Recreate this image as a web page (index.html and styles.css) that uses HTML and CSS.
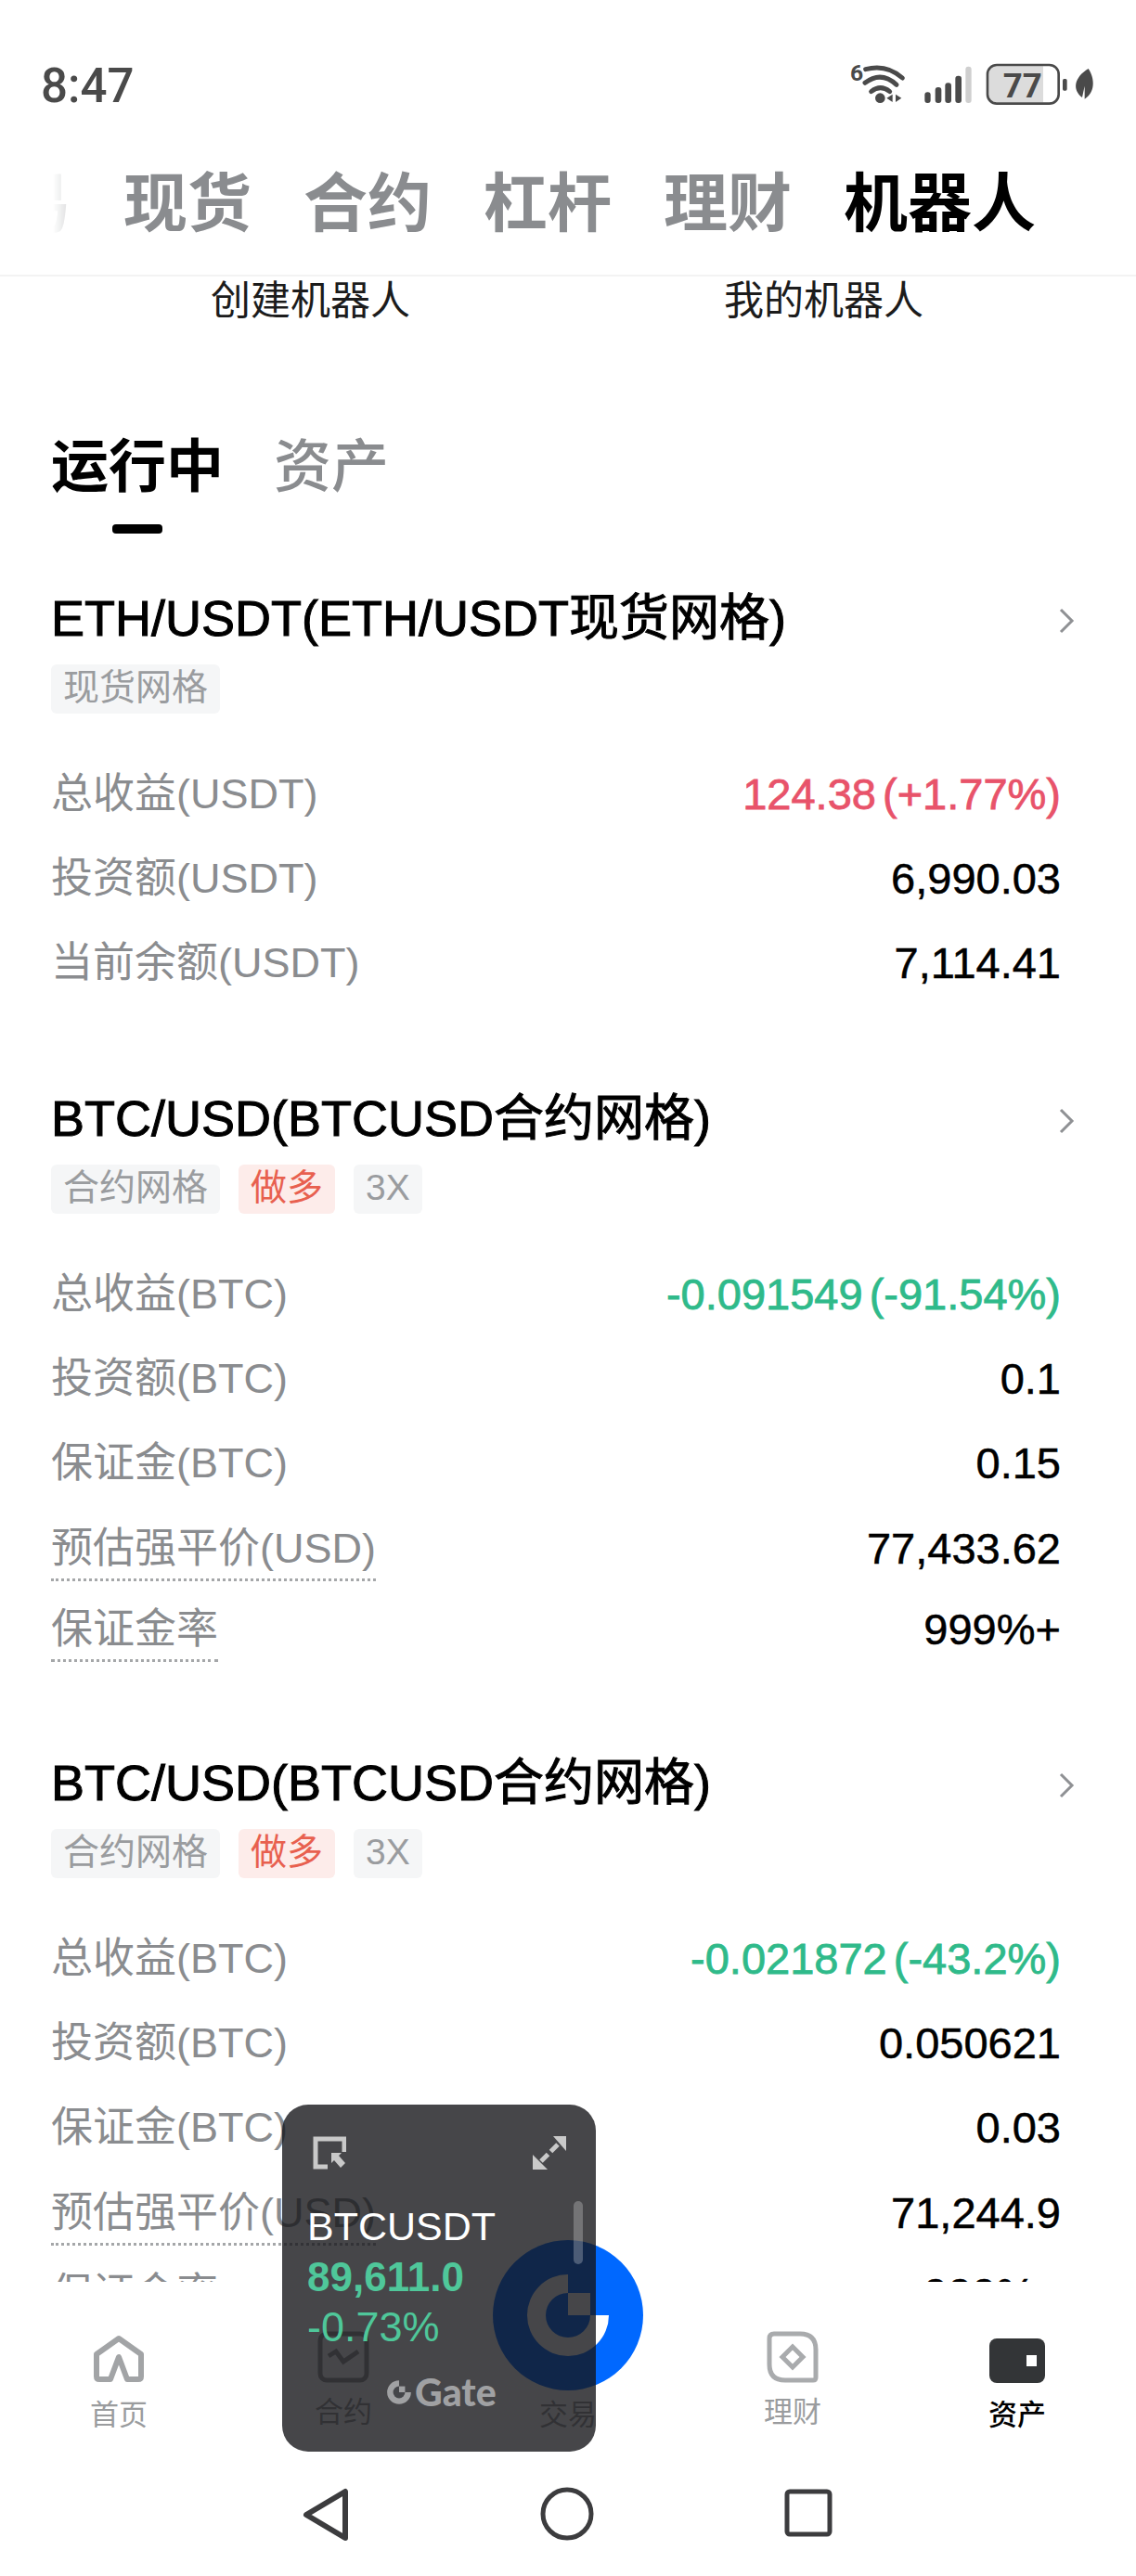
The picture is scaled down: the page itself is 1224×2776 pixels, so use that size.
FILE: index.html
```html
<!DOCTYPE html>
<html lang="zh-CN">
<head>
    <meta charset="UTF-8">
    <meta name="viewport" content="width=device-width, initial-scale=1.0">
    <title>机器人</title>
    <link rel="stylesheet" href="styles.css">
</head>
<body>
<div class="screen">
    <div class="statusbar">
        <span class="clock">8:47</span>
        <svg class="status-icons" viewBox="0 0 1032 240">
            <text x="108" y="112" class="st-six">6</text>
            <g fill="none" stroke="#4a4a4a" stroke-width="15" stroke-linecap="round">
                <path d="M158 74Q225 56 277 102"/>
                <path d="M156 118Q208 78 258 124"/>
                <path d="M176 146Q206 122 236 146"/>
            </g>
            <circle cx="205" cy="167" r="16" fill="#4a4a4a"/>
            <path d="M245 155V180L226 167ZM255 155V180L274 167Z" fill="#4a4a4a"/>
            <g fill="#4a4a4a">
                <rect x="349" y="148" width="19" height="35" rx="9"/>
                <rect x="383" y="132" width="20" height="51" rx="9"/>
                <rect x="415" y="118" width="20" height="65" rx="9"/>
                <rect x="448" y="95" width="20" height="88" rx="9"/>
                <rect x="481" y="65" width="19" height="118" rx="9" fill="#cfcfcf"/>
            </g>
            <path d="M580 64H732V181H580Q556 181 556 157V88Q556 64 580 64Z" fill="#dcdcdc"/>
            <rect x="552" y="60" width="230" height="125" rx="30" fill="none" stroke="#4a4a4a" stroke-width="8"/>
            <text x="665" y="164" class="st-level">77</text>
            <rect x="795" y="105" width="14" height="38" rx="5" fill="#4a4a4a"/>
            <path d="M878 72C900 105 900 150 866 170L866 128L858 165C825 140 832 100 878 72Z" fill="#4a4a4a"/>
        </svg>
    </div>

    <div class="topnav">
        <span class="topnav-cut"><span>交易</span></span>
        <span class="topnav-item">现货</span>
        <span class="topnav-item">合约</span>
        <span class="topnav-item">杠杆</span>
        <span class="topnav-item">理财</span>
        <span class="topnav-item topnav-active">机器人</span>
    </div>

    <div class="content">
        <div class="tools">
            <span>创建机器人</span>
            <span>我的机器人</span>
        </div>

        <div class="subtabs">
            <div class="subtab subtab-active">运行中<i class="subtab-bar"></i></div>
            <div class="subtab">资产</div>
        </div>

        <section class="bot">
            <div class="bot-title">
                <span class="bot-name">ETH/USDT(ETH/USDT现货网格)</span>
                <svg class="chevron" width="18" height="30" viewBox="0 0 18 30"><path d="M3 3L15 15L3 27" fill="none" stroke="#8f9194" stroke-width="3"/></svg>
            </div>
            <div class="tags"><span class="tag">现货网格</span></div>
            <div class="rows">
                <div class="row"><span class="label">总收益(USDT)</span><span class="value up">124.38 (+1.77%)</span></div>
                <div class="row"><span class="label">投资额(USDT)</span><span class="value">6,990.03</span></div>
                <div class="row"><span class="label">当前余额(USDT)</span><span class="value">7,114.41</span></div>
            </div>
        </section>

        <section class="bot">
            <div class="bot-title">
                <span class="bot-name">BTC/USD(BTCUSD合约网格)</span>
                <svg class="chevron" width="18" height="30" viewBox="0 0 18 30"><path d="M3 3L15 15L3 27" fill="none" stroke="#8f9194" stroke-width="3"/></svg>
            </div>
            <div class="tags"><span class="tag">合约网格</span><span class="tag tag-long">做多</span><span class="tag">3X</span></div>
            <div class="rows">
                <div class="row"><span class="label">总收益(BTC)</span><span class="value down">-0.091549 (-91.54%)</span></div>
                <div class="row"><span class="label">投资额(BTC)</span><span class="value">0.1</span></div>
                <div class="row"><span class="label">保证金(BTC)</span><span class="value">0.15</span></div>
                <div class="row row-hint"><span class="label">预估强平价(USD)</span><span class="value">77,433.62</span></div>
                <div class="row row-hint"><span class="label">保证金率</span><span class="value">999%+</span></div>
            </div>
        </section>

        <section class="bot">
            <div class="bot-title">
                <span class="bot-name">BTC/USD(BTCUSD合约网格)</span>
                <svg class="chevron" width="18" height="30" viewBox="0 0 18 30"><path d="M3 3L15 15L3 27" fill="none" stroke="#8f9194" stroke-width="3"/></svg>
            </div>
            <div class="tags"><span class="tag">合约网格</span><span class="tag tag-long">做多</span><span class="tag">3X</span></div>
            <div class="rows">
                <div class="row"><span class="label">总收益(BTC)</span><span class="value down">-0.021872 (-43.2%)</span></div>
                <div class="row"><span class="label">投资额(BTC)</span><span class="value">0.050621</span></div>
                <div class="row"><span class="label">保证金(BTC)</span><span class="value">0.03</span></div>
                <div class="row row-hint"><span class="label">预估强平价(USD)</span><span class="value">71,244.9</span></div>
                <div class="row row-hint"><span class="label">保证金率</span><span class="value">999%+</span></div>
            </div>
        </section>
    </div>

    <div class="tabbar">
        <div class="tab tab-low">
            <div class="tab-icon">
                <svg width="56" height="52" viewBox="0 0 56 52"><path d="M28 4L52 21V45Q52 48 49 48H37L28 24L19 48H7Q4 48 4 45V21Z" fill="none" stroke="#a2a4a6" stroke-width="6" stroke-linejoin="round"/></svg>
            </div>
            <span>首页</span>
        </div>
        <div class="tab">
            <div class="tab-icon">
                <svg width="56" height="56" viewBox="0 0 56 56"><rect x="3" y="3" width="50" height="50" rx="7" fill="none" stroke="#9a9c9e" stroke-width="5"/><path d="M12 27L20 22L28 33L44 22" fill="none" stroke="#9a9c9e" stroke-width="5"/></svg>
            </div>
            <span>合约</span>
        </div>
        <div class="tab tab-low">
            <div class="tab-icon"></div>
            <span>交易</span>
        </div>
        <div class="tab">
            <div class="tab-icon">
                <svg width="56" height="56" viewBox="0 0 56 56"><path d="M8 3H36Q53 3 53 20V50Q53 53 50 53H20Q3 53 3 36V8Q3 3 8 3Z" fill="none" stroke="#a9abad" stroke-width="5"/><path d="M28 17L39 28L28 39L17 28Z" fill="none" stroke="#a9abad" stroke-width="5"/></svg>
            </div>
            <span>理财</span>
        </div>
        <div class="tab tab-low tab-active">
            <div class="tab-icon">
                <svg width="60" height="48" viewBox="0 0 60 48"><rect width="60" height="48" rx="8" fill="#333537"/><rect x="40" y="18" width="11" height="12" fill="#fff"/></svg>
            </div>
            <span>资产</span>
        </div>
    </div>

    <div class="sysnav">
        <svg width="52" height="60" viewBox="0 0 52 60"><path d="M47 5V55L5 30Z" fill="none" stroke="#3c3c3e" stroke-width="6" stroke-linejoin="round"/></svg>
        <svg width="58" height="58" viewBox="0 0 58 58"><circle cx="29" cy="29" r="26" fill="none" stroke="#3c3c3e" stroke-width="5"/></svg>
        <svg class="sysnav-square" width="52" height="52" viewBox="0 0 52 52"><rect x="3" y="3" width="46" height="46" rx="3" fill="none" stroke="#3c3c3e" stroke-width="5"/></svg>
    </div>

    <svg class="gate-ball" width="164" height="164" viewBox="0 0 164 164">
        <circle cx="82" cy="82" r="81" fill="#0068ff"/>
        <path d="M82 82V38A44 44 0 1 0 126 82Z" fill="#fff"/>
        <circle cx="82" cy="82" r="24" fill="#0068ff"/>
        <rect x="82" y="58" width="24" height="24" fill="#fff"/>
    </svg>

    <div class="ticker">
        <div class="ticker-head">
            <svg width="36" height="36" viewBox="0 0 36 36"><path d="M34 17V3H3V33H16" fill="none" stroke="#c9c9c9" stroke-width="5"/><path d="M20 18H31L28 21L35 29L30 34L23 26L20 29Z" fill="#c9c9c9"/></svg>
            <svg width="36" height="36" viewBox="0 0 36 36"><path d="M22 0H36V16ZM0 20L16 36H0Z" fill="#c9c9c9"/><path d="M27 9L19.500 16.500M16.500 19.500L9 27" stroke="#c9c9c9" stroke-width="5"/></svg>
        </div>
        <div class="ticker-pair">BTCUSDT</div>
        <div class="ticker-price">89,611.0</div>
        <div class="ticker-change">-0.73%</div>
        <div class="ticker-brand">
            <svg width="30" height="30" viewBox="0 0 28 28"><path d="M14 14V2A12 12 0 1 0 26 14Z" fill="#a0a1a3"/><circle cx="14" cy="14" r="6" fill="#45464a"/><rect x="14" y="8" width="6" height="6" fill="#a0a1a3"/></svg>
            <span>Gate</span>
        </div>
        <i class="ticker-scroll"></i>
    </div>
</div>
</body>
</html>
```

FILE: styles.css
```css
* {
    box-sizing: border-box;
}
body {
    margin: 0;
    background-color: #fff;
    font-family: "Liberation Sans", "Noto Sans CJK SC", sans-serif;
    color: #000;
}
.screen {
    position: relative;
    width: 1224px;
    height: 2776px;
    display: flex;
    flex-direction: column;
    overflow: hidden;
}

/* status bar */
.statusbar {
    height: 160px;
    flex: none;
    padding: 50px 0 0 44px;
    display: flex;
    justify-content: space-between;
    align-items: flex-start;
}
.clock {
    font-family: Roboto, sans-serif;
    font-size: 51px;
    font-weight: 500;
    line-height: 86px;
    color: #4a4a4a;
}
.status-icons {
    width: 344px;
    height: 80px;
}
.st-six {
    font-family: Roboto, sans-serif;
    font-weight: 700;
    font-size: 74px;
    fill: #4a4a4a;
}
.st-level {
    font-family: Roboto, sans-serif;
    font-weight: 700;
    font-size: 110px;
    fill: #4a4a4a;
    text-anchor: middle;
}

/* top navigation */
.topnav {
    height: 138px;
    flex: none;
    padding: 21px 0 0 57px;
    display: flex;
    gap: 56px;
    border-bottom: 2px solid #f3f3f3;
    font-size: 69px;
    line-height: 80px;
    font-weight: 700;
    color: #8a8c8f;
}
.topnav-cut {
    width: 20px;
    height: 80px;
    overflow: hidden;
    display: flex;
    justify-content: flex-end;
    color: #d8d9da;
    -webkit-mask-image: linear-gradient(to right, transparent, #000);
    mask-image: linear-gradient(to right, transparent, #000);
}
.topnav-cut span {
    flex: none;
}
.topnav-active {
    color: #000;
}

/* scrolling content */
.content {
    height: 2161px;
    flex: none;
    overflow: hidden;
}
.tools {
    display: grid;
    grid-template-columns: 553px 553px;
    padding-left: 58px;
    font-size: 43px;
    line-height: 52px;
    text-align: center;
    color: #1c1c1c;
}
.subtabs {
    margin-top: 119px;
    padding-left: 55px;
    display: flex;
    gap: 54px;
    font-size: 62px;
    line-height: 70px;
    font-weight: 500;
    color: #8a8c8f;
}
.subtab {
    display: flex;
    flex-direction: column;
    align-items: center;
}
.subtab-active {
    color: #000;
    font-weight: 700;
}
.subtab-bar {
    width: 54px;
    height: 10px;
    margin-top: 26px;
    border-radius: 4px;
    background-color: #000;
}

/* bot cards */
.bot {
    margin-top: 89px;
    padding: 0 81px 0 55px;
}
.subtabs + .bot {
    margin-top: 58px;
}
.bot-title {
    height: 66px;
    margin-right: -15px;
    display: flex;
    justify-content: space-between;
    align-items: center;
    font-size: 54px;
}
.bot-name {
    padding-bottom: 10px;
    -webkit-text-stroke: 1px #000;
}
.chevron {
    margin-top: 6px;
}
.tags {
    margin-top: 17px;
    display: flex;
    gap: 20px;
}
.tag {
    height: 53px;
    padding: 0 13px;
    border-radius: 6px;
    background-color: #f5f6f7;
    font-size: 39px;
    line-height: 50px;
    color: #9a9c9f;
}
.tag-long {
    background-color: #fdecea;
    color: #e8604f;
}
.rows {
    margin-top: 41px;
}
.row {
    height: 91px;
    display: flex;
    justify-content: space-between;
    align-items: center;
    font-size: 45px;
    line-height: 56px;
}
.row-hint {
    height: 87px;
    margin-top: 3px;
    padding-top: 16px;
    align-items: flex-start;
}
.row-hint + .row-hint {
    margin-top: 0;
}
.row-hint .label {
    padding-bottom: 4px;
    border-bottom: 3px dotted #a5a7a9;
}
.label {
    color: #8a8c8f;
}
.value {
    font-size: 47px;
    word-spacing: -6px;
    color: #000;
    -webkit-text-stroke: 0.5px currentColor;
}
.up,
.down {
    -webkit-text-stroke-width: 0.8px;
}
.up {
    color: #e8536a;
}
.down {
    color: #2fba8a;
}

/* bottom tabs */
.tabbar {
    height: 191px;
    flex: none;
    padding: 52px 7px 0;
    display: grid;
    grid-template-columns: repeat(5, 1fr);
    font-size: 31px;
    line-height: 40px;
    color: #9a9c9e;
}
.tab {
    display: flex;
    flex-direction: column;
    align-items: center;
    gap: 12px;
}
.tab-low {
    gap: 15px;
}
.tab-icon {
    height: 57px;
    display: flex;
    align-items: flex-end;
}
.tab-active {
    color: #000;
    font-weight: 500;
}

/* android navigation */
.sysnav {
    height: 126px;
    flex: none;
    padding: 30px 0 0 325px;
    display: flex;
    align-items: flex-start;
    gap: 205px;
}
.sysnav-square {
    margin-top: 2px;
}

/* floating ticker */
.gate-ball {
    position: absolute;
    left: 530px;
    top: 2413px;
}
.ticker {
    position: absolute;
    left: 304px;
    top: 2268px;
    width: 338px;
    height: 374px;
    padding: 34px 32px 0 27px;
    border-radius: 28px;
    background-color: rgba(20, 20, 24, 0.79);
    color: #fff;
}
.ticker-head {
    height: 38px;
    padding-left: 6px;
    display: flex;
    justify-content: space-between;
}
.ticker-pair {
    margin-top: 31px;
    font-size: 43px;
    line-height: 56px;
}
.ticker-price {
    font-size: 44px;
    line-height: 54px;
    font-weight: 700;
    color: #4fc79a;
}
.ticker-change {
    font-size: 45px;
    line-height: 54px;
    color: #4fc79a;
}
.ticker-brand {
    margin: 26px 0 0 84px;
    display: flex;
    align-items: center;
    gap: 2px;
    font-family: Lato, sans-serif;
    font-size: 41px;
    line-height: 34px;
    font-weight: 900;
    color: #a0a1a3;
}
.ticker-scroll {
    position: absolute;
    left: 314px;
    top: 104px;
    width: 10px;
    height: 68px;
    border-radius: 5px;
    background-color: rgba(255, 255, 255, 0.25);
}
```
